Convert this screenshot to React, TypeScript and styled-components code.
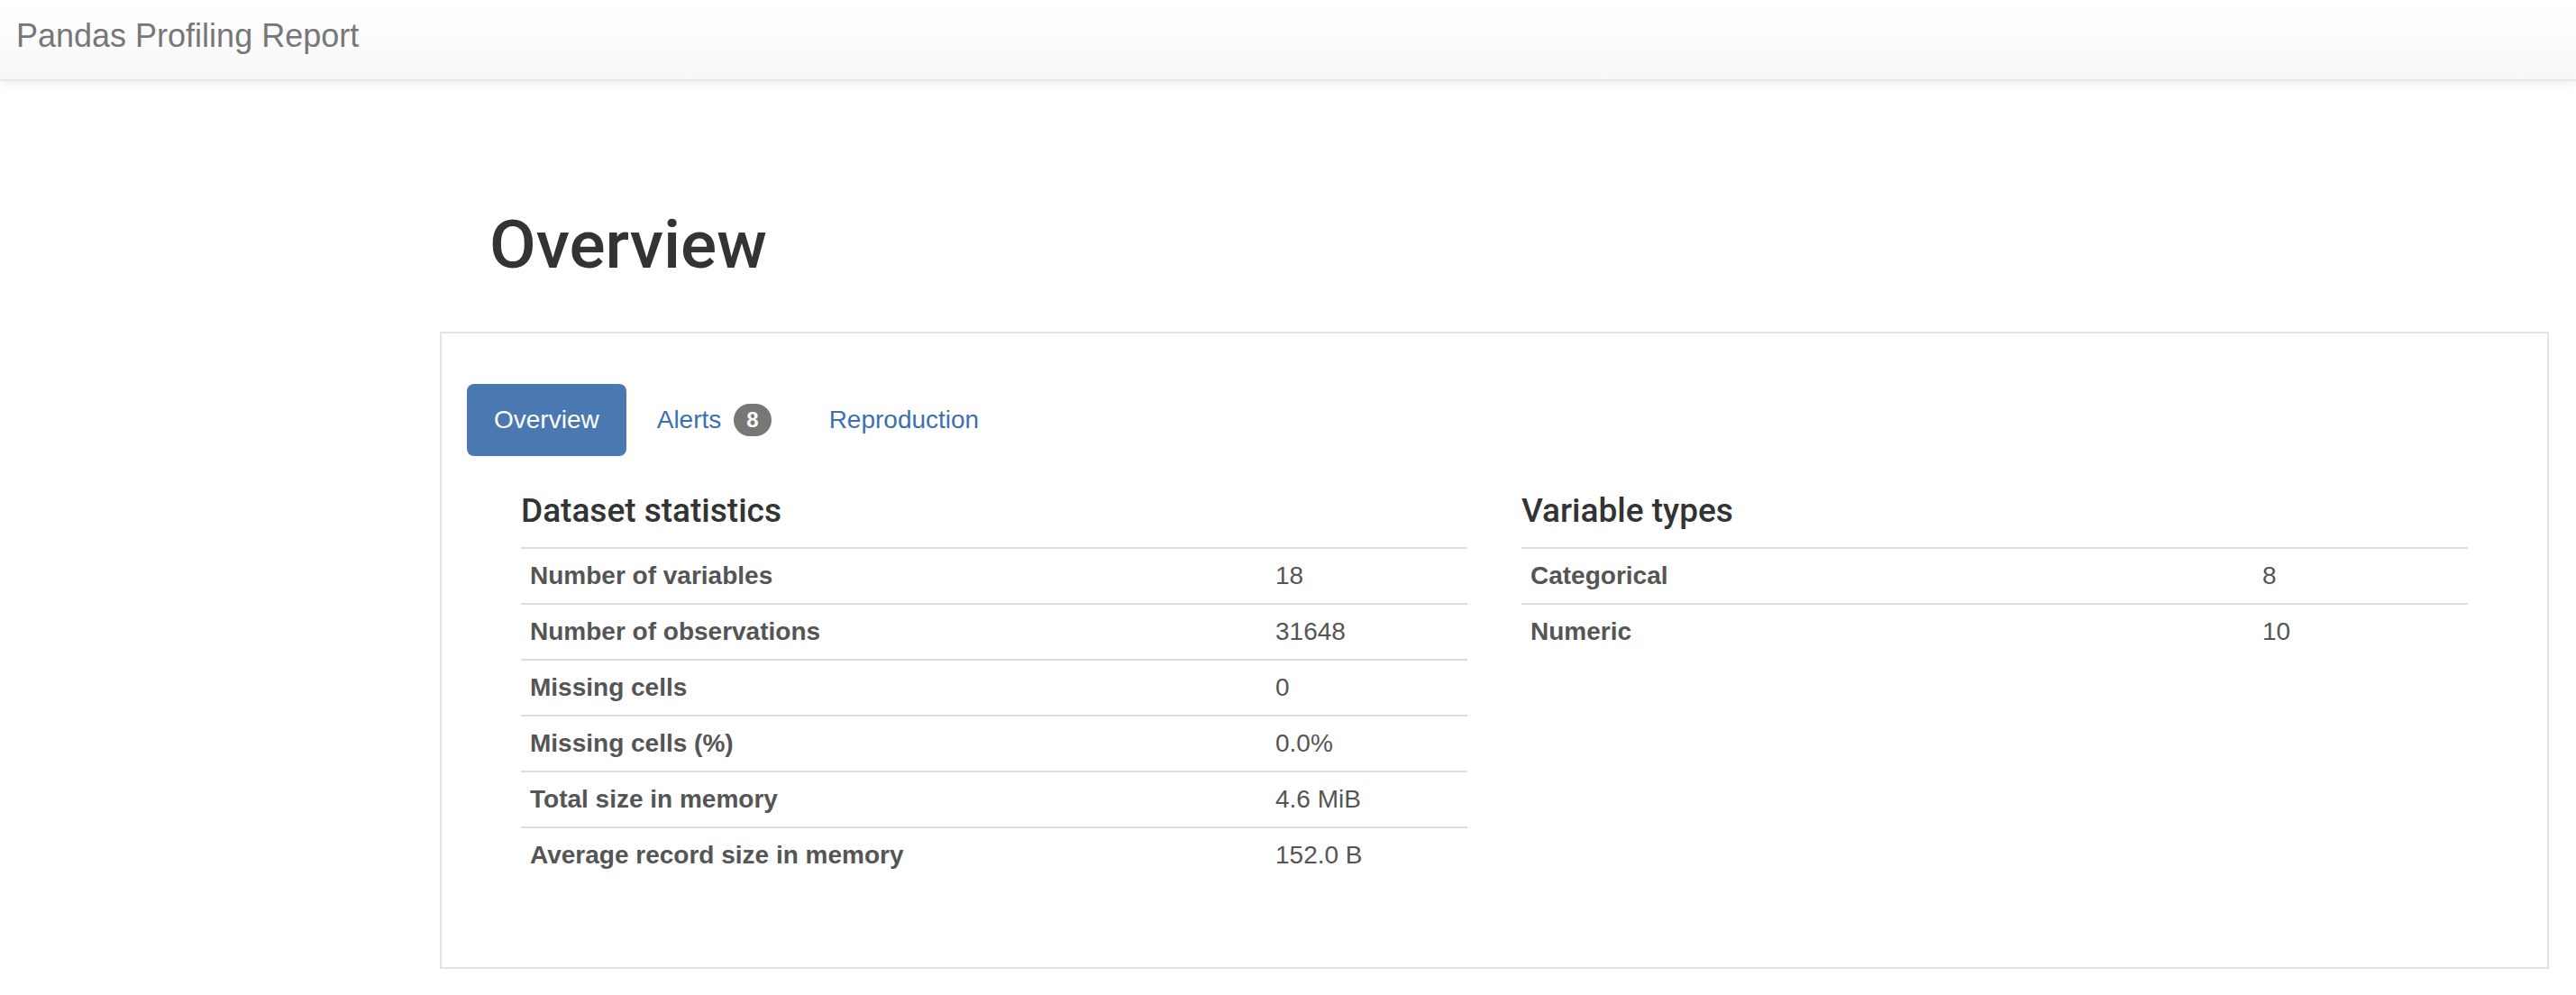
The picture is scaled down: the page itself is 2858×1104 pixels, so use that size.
import React from "react";
import styled, { createGlobalStyle } from "styled-components";

const GlobalStyle = createGlobalStyle`
  html, body {
    margin: 0;
    padding: 0;
    background: #ffffff;
  }
  body {
    font-family: "Liberation Sans", Arial, Helvetica, sans-serif;
    color: #333333;
  }
  * { box-sizing: border-box; }
`;

const Navbar = styled.header`
  height: 90px;
  display: flex;
  align-items: flex-start;
  padding: 20px 18px 0;
  background: linear-gradient(to bottom, #ffffff 0%, #f8f8f8 100%);
  border-bottom: 2px solid #e7e7e7;
  box-shadow: 0 2px 10px rgba(0, 0, 0, 0.075);
`;

const Brand = styled.a`
  font-size: 36px;
  line-height: 40px;
  color: #777777;
  text-decoration: none;
`;

const Main = styled.main`
  padding: 0 30px 0 488px;
`;

const PageTitle = styled.h1`
  margin: 142px 0 57px 55px;
  font-family: Roboto, "Liberation Sans", Arial, sans-serif;
  font-size: 75px;
  line-height: 79px;
  font-weight: 500;
  color: #333333;
`;

const Panel = styled.section`
  border: 2px solid #e2e2e8;
  padding: 56px 28px 54px;
`;

const Pills = styled.nav`
  display: flex;
  align-items: center;
  gap: 4px;
`;

const Pill = styled.a<{ $active?: boolean }>`
  display: flex;
  align-items: center;
  gap: 14px;
  padding: 20px 30px;
  font-size: 28px;
  line-height: 40px;
  border-radius: 8px;
  text-decoration: none;
  color: ${(p) => (p.$active ? "#ffffff" : "#3c70b2")};
  background: ${(p) => (p.$active ? "#4a79b2" : "transparent")};
`;

const Badge = styled.span`
  display: inline-block;
  min-width: 40px;
  height: 36px;
  padding: 6px 14px;
  border-radius: 20px;
  background: #777777;
  color: #ffffff;
  font-size: 24px;
  line-height: 24px;
  font-weight: 700;
  text-align: center;
`;

const TabContent = styled.div`
  display: grid;
  grid-template-columns: 1fr 1fr;
  column-gap: 60px;
  padding: 21px 60px 0;
`;

const Column = styled.div`
  display: flex;
  flex-direction: column;
`;

const SectionTitle = styled.h4`
  margin: 20px 0;
  font-family: Roboto, "Liberation Sans", Arial, sans-serif;
  font-size: 37px;
  line-height: 40px;
  font-weight: 500;
  color: #333333;
`;

const StatTable = styled.div<{ $labelWidth: number }>`
  display: grid;
  grid-template-columns: ${(p) => p.$labelWidth}px 1fr;
  margin-bottom: 40px;
`;

const Cell = styled.div<{ $label?: boolean }>`
  border-top: 2px solid #dddddd;
  padding: 10px;
  font-size: 28px;
  line-height: 40px;
  color: #555555;
  font-weight: ${(p) => (p.$label ? 700 : 400)};
  white-space: nowrap;
`;

type Row = [string, string];

const datasetStats: Row[] = [
  ["Number of variables", "18"],
  ["Number of observations", "31648"],
  ["Missing cells", "0"],
  ["Missing cells (%)", "0.0%"],
  ["Total size in memory", "4.6 MiB"],
  ["Average record size in memory", "152.0 B"],
];

const variableTypes: Row[] = [
  ["Categorical", "8"],
  ["Numeric", "10"],
];

function Stats({ title, rows, labelWidth }: { title: string; rows: Row[]; labelWidth: number }) {
  return (
    <Column>
      <SectionTitle>{title}</SectionTitle>
      <StatTable $labelWidth={labelWidth}>
        {rows.map(([k, v]) => (
          <React.Fragment key={k}>
            <Cell $label>{k}</Cell>
            <Cell>{v}</Cell>
          </React.Fragment>
        ))}
      </StatTable>
    </Column>
  );
}

export default function App() {
  return (
    <>
      <GlobalStyle />
      <Navbar>
        <Brand href="#">Pandas Profiling Report</Brand>
      </Navbar>
      <Main>
        <PageTitle>Overview</PageTitle>
        <Panel>
          <Pills>
            <Pill $active href="#">Overview</Pill>
            <Pill href="#">
              Alerts <Badge>8</Badge>
            </Pill>
            <Pill href="#">Reproduction</Pill>
          </Pills>
          <TabContent>
            <Stats title="Dataset statistics" rows={datasetStats} labelWidth={827} />
            <Stats title="Variable types" rows={variableTypes} labelWidth={812} />
          </TabContent>
        </Panel>
      </Main>
    </>
  );
}
